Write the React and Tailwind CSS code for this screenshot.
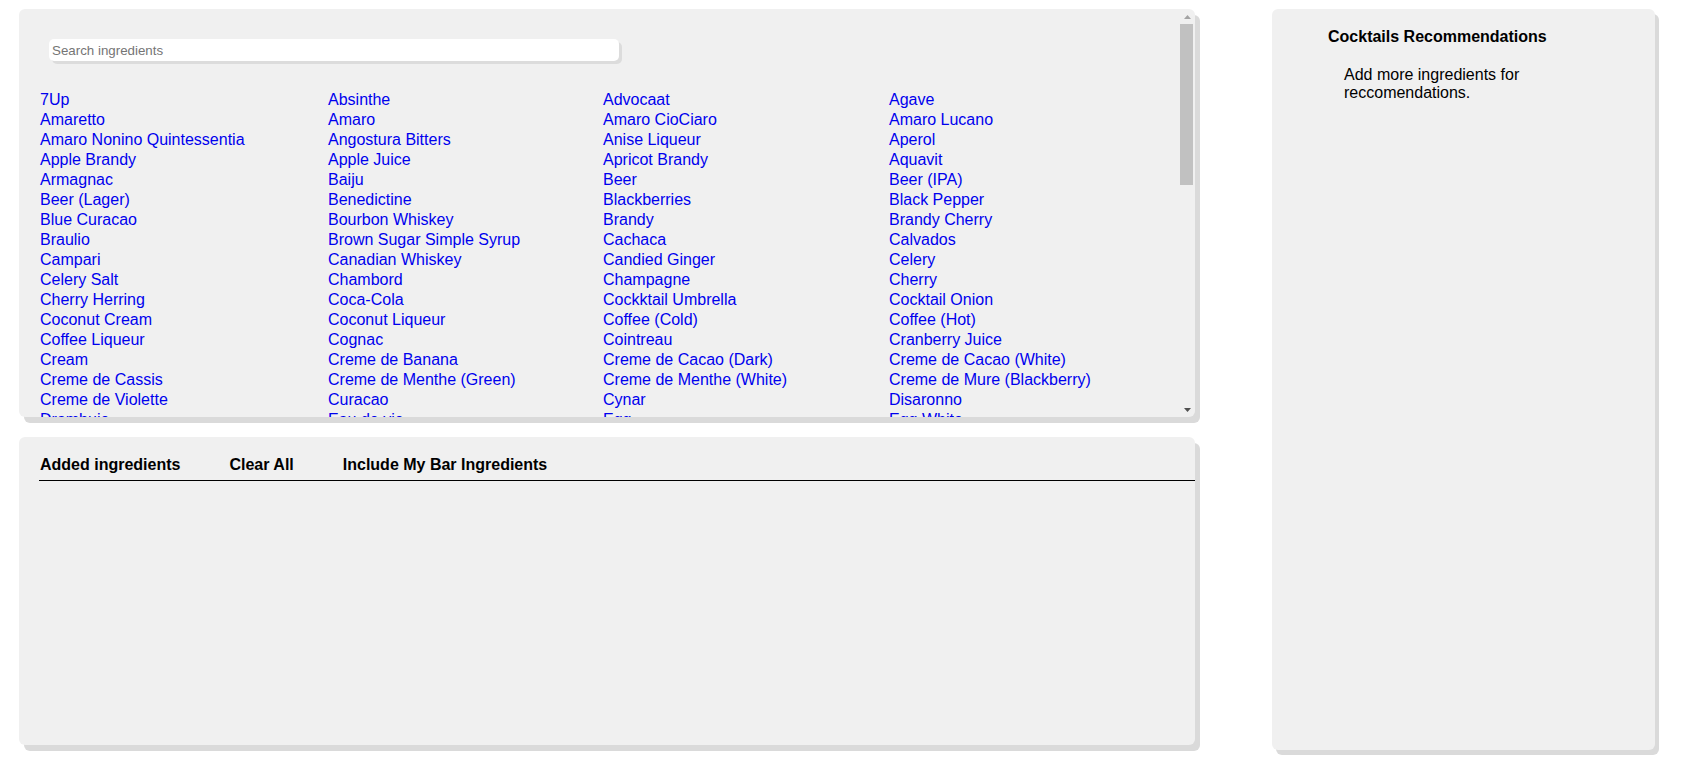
import { useState } from "react";

const ingredients = [
  "7Up", "Absinthe", "Advocaat", "Agave",
  "Amaretto", "Amaro", "Amaro CioCiaro", "Amaro Lucano",
  "Amaro Nonino Quintessentia", "Angostura Bitters", "Anise Liqueur", "Aperol",
  "Apple Brandy", "Apple Juice", "Apricot Brandy", "Aquavit",
  "Armagnac", "Baiju", "Beer", "Beer (IPA)",
  "Beer (Lager)", "Benedictine", "Blackberries", "Black Pepper",
  "Blue Curacao", "Bourbon Whiskey", "Brandy", "Brandy Cherry",
  "Braulio", "Brown Sugar Simple Syrup", "Cachaca", "Calvados",
  "Campari", "Canadian Whiskey", "Candied Ginger", "Celery",
  "Celery Salt", "Chambord", "Champagne", "Cherry",
  "Cherry Herring", "Coca-Cola", "Cockktail Umbrella", "Cocktail Onion",
  "Coconut Cream", "Coconut Liqueur", "Coffee (Cold)", "Coffee (Hot)",
  "Coffee Liqueur", "Cognac", "Cointreau", "Cranberry Juice",
  "Cream", "Creme de Banana", "Creme de Cacao (Dark)", "Creme de Cacao (White)",
  "Creme de Cassis", "Creme de Menthe (Green)", "Creme de Menthe (White)", "Creme de Mure (Blackberry)",
  "Creme de Violette", "Curacao", "Cynar", "Disaronno",
  "Drambuie", "Eau de vie", "Egg", "Egg White",
  "Elderflower Liqueur", "Espresso", "Falernum", "Fernet Branca",
  "Fino Sherry", "Frangelico", "Galliano", "Gin",
  "Ginger", "Ginger Ale", "Ginger Beer", "Ginger Liqueur",
  "Grand Marnier", "Grapefruit", "Grapefruit Juice", "Green Chartreuse",
  "Grenadine", "Heavy Cream", "Honey", "Honey Syrup",
  "Irish Cream", "Irish Whiskey", "Jagermeister", "Kahlua",
  "Kirschwasser", "Lemon", "Lemon Juice", "Lemon Peel",
  "Lemonade", "Licor 43", "Lillet Blanc", "Lime",
  "Lime Juice", "Limoncello", "Maple Syrup", "Maraschino Cherry",
  "Maraschino Liqueur", "Melon Liqueur", "Mezcal", "Midori",
  "Milk", "Mint", "Montenegro", "Nutmeg",
  "Olive", "Orange", "Orange Bitters", "Orange Juice",
  "Orange Peel", "Orgeat", "Passion Fruit", "Peach",
  "Peach Schnapps", "Peychaud's Bitters", "Pimm's", "Pineapple",
  "Pineapple Juice", "Pisco", "Pomegranate Juice", "Port",
  "Prosecco", "Punt e Mes", "Raspberries", "Raspberry Liqueur",
  "Red Wine", "Rhubarb", "Rosemary", "Rum (Dark)",
  "Rum (Gold)", "Rum (Spiced)", "Rum (White)", "Rye Whiskey",
  "Sake", "Salt", "Scotch Whisky", "Sherry",
  "Simple Syrup", "Sloe Gin", "Soda Water", "Sparkling Wine",
  "Strawberries", "Sugar", "Suze", "Sweet Vermouth",
  "Tabasco", "Tea", "Tequila (Blanco)", "Tequila (Reposado)",
  "Thyme", "Tomato Juice", "Tonic Water", "Triple Sec",
  "Vanilla Extract", "Vanilla Syrup", "Vermouth (Dry)", "Vodka",
  "Vodka (Citron)", "Vodka (Vanilla)", "Watermelon", "Whipped Cream",
  "White Wine", "Worcestershire Sauce", "Yellow Chartreuse", "Yuzu Juice",
];

function ScrollBar() {
  return (
    <div className="flex w-[15px] shrink-0 flex-col">
      <div className="flex h-[15px] items-center justify-center">
        <svg width="7" height="4" viewBox="0 0 7 4">
          <path d="M0 4h7L3.5 0z" fill="#a3a3a3" />
        </svg>
      </div>
      <div className="h-[161px] w-[13px] bg-[#c1c1c1]" />
      <div className="flex-1" />
      <div className="flex h-[15px] items-center justify-center">
        <svg width="7" height="4" viewBox="0 0 7 4">
          <path d="M0 0h7L3.5 4z" fill="#505050" />
        </svg>
      </div>
    </div>
  );
}

function App() {
  const [search, setSearch] = useState("");
  const [added, setAdded] = useState([]);

  const shown = ingredients.filter((i) =>
    i.toLowerCase().includes(search.toLowerCase())
  );

  return (
    <div className="flex min-h-screen bg-white pt-[9px] pl-[19px] font-['Liberation_Sans',Arial,sans-serif] leading-[normal] text-black">
      <div className="flex w-[1176px] flex-col gap-[20px]">
        <section className="flex h-[408px] overflow-hidden rounded-md bg-[#f0f0f0] shadow-[5px_6px_0_#dadada]">
          <div className="flex-1 overflow-y-auto [scrollbar-width:none]">
            <input
              type="text"
              value={search}
              onChange={(e) => setSearch(e.target.value)}
              placeholder="Search ingredients"
              className="mt-[30px] ml-[30px] block h-[22px] w-[570px] rounded-[5px] bg-white px-[3px] text-[13.33px] shadow-[3px_3px_0_#dcdcdc] outline-none placeholder:text-[#757575]"
            />
            <div className="mt-[29px] ml-[21px] grid grid-cols-[288px_275px_286px_1fr] pb-[22px] text-base leading-[20px] text-[#0000ee]">
              {shown.map((name) => (
                <button
                  key={name}
                  onClick={() => !added.includes(name) && setAdded([...added, name])}
                  className="cursor-pointer text-left whitespace-nowrap"
                >
                  {name}
                </button>
              ))}
            </div>
          </div>
          <ScrollBar />
        </section>

        <section className="h-[308px] rounded-md bg-[#f0f0f0] shadow-[5px_6px_0_#dadada]">
          <div className="mt-[19px] ml-[20px] flex gap-[49px] border-b border-black pb-[6px] pl-[1px] text-base leading-[normal] font-bold">
            <span>Added ingredients</span>
            <button onClick={() => setAdded([])} className="cursor-pointer font-bold">
              Clear All
            </button>
            <span>Include My Bar Ingredients</span>
          </div>
          <div className="mt-2 ml-[21px] flex flex-wrap gap-2 text-[#0000ee]">
            {added.map((a) => (
              <span key={a}>{a}</span>
            ))}
          </div>
        </section>
      </div>

      <aside className="ml-[77px] h-[741px] w-[383px] rounded-md bg-[#f0f0f0] pt-[19px] pl-[56px] shadow-[4px_5px_0_#dadada]">
        <h2 className="text-base leading-[normal] font-bold">Cocktails Recommendations</h2>
        <p className="mt-[20px] ml-[16px] max-w-[220px] text-base leading-[normal]">
          Add more ingredients for reccomendations.
        </p>
      </aside>
    </div>
  );
}

export default App;
